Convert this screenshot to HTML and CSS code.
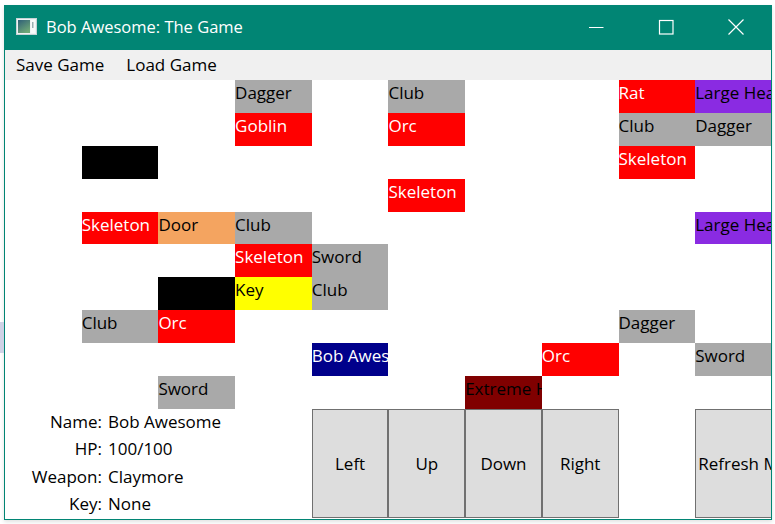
FILE: index.html
```html
<!DOCTYPE html>
<html>
<head>
<meta charset="utf-8">
<title>Bob Awesome: The Game</title>
<link rel="stylesheet" href="styles.css">
</head>
<body>
<div class="desk-patch"></div>
<div class="window">
  <div class="titlebar">
    <svg class="app-icon" width="21" height="17" viewBox="0 0 21 17">
      <defs>
        <linearGradient id="ig" x1="0" y1="0" x2="0.6" y2="1">
          <stop offset="0" stop-color="#2f5f78"/>
          <stop offset="1" stop-color="#6fa877"/>
        </linearGradient>
      </defs>
      <rect x="0.5" y="0.5" width="20" height="16" fill="#eef3f4" stroke="#c6d3d6"/>
      <rect x="2" y="2" width="12" height="13" fill="url(#ig)"/>
      <rect x="15" y="2" width="4" height="13" fill="#f7fafa"/>
      <rect x="16" y="4" width="1.5" height="6" fill="#9bb0b2"/>
    </svg>
    <span class="title">Bob Awesome: The Game</span>
    <div class="controls">
      <div class="ctl">
        <svg width="16" height="16" viewBox="0 0 16 16"><path d="M1 8.5H15.5" stroke="#fff" stroke-width="1"/></svg>
      </div>
      <div class="ctl">
        <svg width="16" height="16" viewBox="0 0 16 16"><rect x="1.5" y="1.5" width="13.5" height="13.5" fill="none" stroke="#fff" stroke-width="1.2"/></svg>
      </div>
      <div class="ctl">
        <svg width="16" height="16" viewBox="0 0 16 16"><path d="M0.5 0.5L15.5 15.5M15.5 0.5L0.5 15.5" stroke="#fff" stroke-width="1.2"/></svg>
      </div>
    </div>
  </div>
  <div class="menu">
    <span class="menu-item">Save Game</span>
    <span class="menu-item">Load Game</span>
  </div>
  <div class="board">
    <div class="cell item r0 c3">Dagger</div>
    <div class="cell item r0 c5">Club</div>
    <div class="cell mon r0 c8">Rat</div>
    <div class="cell potion r0 c9">Large Health Potion</div>

    <div class="cell mon r1 c3">Goblin</div>
    <div class="cell mon r1 c5">Orc</div>
    <div class="cell item r1 c8">Club</div>
    <div class="cell item r1 c9">Dagger</div>

    <div class="cell wall r2 c1"></div>
    <div class="cell mon r2 c8">Skeleton</div>

    <div class="cell mon r3 c5">Skeleton</div>

    <div class="cell mon r4 c1">Skeleton</div>
    <div class="cell door r4 c2">Door</div>
    <div class="cell item r4 c3">Club</div>
    <div class="cell potion r4 c9">Large Health Potion</div>

    <div class="cell mon r5 c3">Skeleton</div>
    <div class="cell item r5 c4">Sword</div>

    <div class="cell wall r6 c2"></div>
    <div class="cell key r6 c3">Key</div>
    <div class="cell item r6 c4">Club</div>

    <div class="cell item r7 c1">Club</div>
    <div class="cell mon r7 c2">Orc</div>
    <div class="cell item r7 c8">Dagger</div>

    <div class="cell player r8 c4">Bob Awesome</div>
    <div class="cell mon r8 c7">Orc</div>
    <div class="cell item r8 c9">Sword</div>

    <div class="cell item r9 c2">Sword</div>
    <div class="cell xpotion r9 c6">Extreme Health Potion</div>

    <div class="stats">
      <span class="lbl">Name:</span><span class="val">Bob Awesome</span>
      <span class="lbl">HP:</span><span class="val">100/100</span>
      <span class="lbl">Weapon:</span><span class="val">Claymore</span>
      <span class="lbl">Key:</span><span class="val">None</span>
    </div>

    <div class="btn r10 c4">Left</div>
    <div class="btn r10 c5">Up</div>
    <div class="btn r10 c6">Down</div>
    <div class="btn r10 c7">Right</div>
    <div class="btn r10 c9">Refresh Map</div>
  </div>
</div>
</body>
</html>
```

FILE: styles.css
```css
html, body {
  margin: 0;
  padding: 0;
  background: #ffffff;
  width: 775px;
  height: 524px;
  overflow: hidden;
  font-family: "Open Sans", "Noto Sans", "Liberation Sans", sans-serif;
}

body {
  position: relative;
}

.desk-patch {
  position: absolute;
  left: 0;
  top: 322px;
  width: 4px;
  height: 31px;
  background: #cfd2e6;
}

.window {
  box-sizing: border-box;
  margin: 5px 0 0 4px;
  width: 768px;
  height: 515px;
  border: 1px solid #018574;
  border-top: 0;
  background: #ffffff;
  overflow: hidden;
  box-shadow: 0 2px 4px rgba(0, 0, 0, 0.12);
  display: flex;
  flex-direction: column;
}

.titlebar {
  height: 45px;
  flex: 0 0 45px;
  background: #018574;
  display: flex;
  align-items: center;
  padding-left: 11px;
  color: #ffffff;
}

.app-icon {
  display: block;
  margin-top: -2px;
  margin-right: 9px;
  flex: 0 0 auto;
}

.title {
  font-size: 16.5px;
  line-height: 20px;
  white-space: nowrap;
  margin-top: -1px;
}

.controls {
  margin-left: auto;
  display: flex;
  height: 100%;
}

.ctl {
  width: 70px;
  height: 100%;
  display: flex;
  align-items: center;
  justify-content: center;
}

.ctl svg {
  display: block;
  margin-top: -1px;
}

.menu {
  height: 30px;
  flex: 0 0 30px;
  background: #f0f0f0;
  display: flex;
  align-items: center;
  font-size: 17px;
  line-height: 30px;
  color: #000;
}

.menu-item {
  padding: 0 11px;
  white-space: nowrap;
}

.board {
  display: grid;
  grid-template-columns: repeat(10, 76.7px);
  grid-template-rows: repeat(10, 32.9px) 110px;
  width: 767px;
  font-size: 17px;
}

.cell {
  box-sizing: border-box;
  overflow: hidden;
  white-space: nowrap;
  line-height: 23px;
  padding-top: 1px;
  color: #000;
}

.item { background: #a9a9a9; }
.mon { background: #ff0000; color: #fff; }
.potion { background: #8a2be2; }
.wall { background: #000; }
.door { background: #f4a460; }
.key { background: #ffff00; }
.player { background: #00008b; color: #fff; }
.xpotion { background: #800000; }

.r0 { grid-row: 1; }
.r1 { grid-row: 2; }
.r2 { grid-row: 3; }
.r3 { grid-row: 4; }
.r4 { grid-row: 5; }
.r5 { grid-row: 6; }
.r6 { grid-row: 7; }
.r7 { grid-row: 8; }
.r8 { grid-row: 9; }
.r9 { grid-row: 10; }
.r10 { grid-row: 11; }

.c0 { grid-column: 1; }
.c1 { grid-column: 2; }
.c2 { grid-column: 3; }
.c3 { grid-column: 4; }
.c4 { grid-column: 5; }
.c5 { grid-column: 6; }
.c6 { grid-column: 7; }
.c7 { grid-column: 8; }
.c8 { grid-column: 9; }
.c9 { grid-column: 10; }

.stats {
  grid-row: 11;
  grid-column: 1 / 5;
  display: grid;
  grid-template-columns: 97px auto;
  column-gap: 6px;
  align-content: start;
  line-height: 27.4px;
  margin-top: -1px;
  color: #000;
}

.lbl {
  text-align: right;
  white-space: nowrap;
}

.val {
  white-space: nowrap;
}

.btn {
  box-sizing: border-box;
  border: 1px solid #707070;
  background: #dddddd;
  color: #000;
  display: flex;
  align-items: center;
  justify-content: center;
  justify-content: safe center;
  padding: 0 2px;
  overflow: hidden;
  white-space: nowrap;
  line-height: 23px;
  height: 109px;
}
```
